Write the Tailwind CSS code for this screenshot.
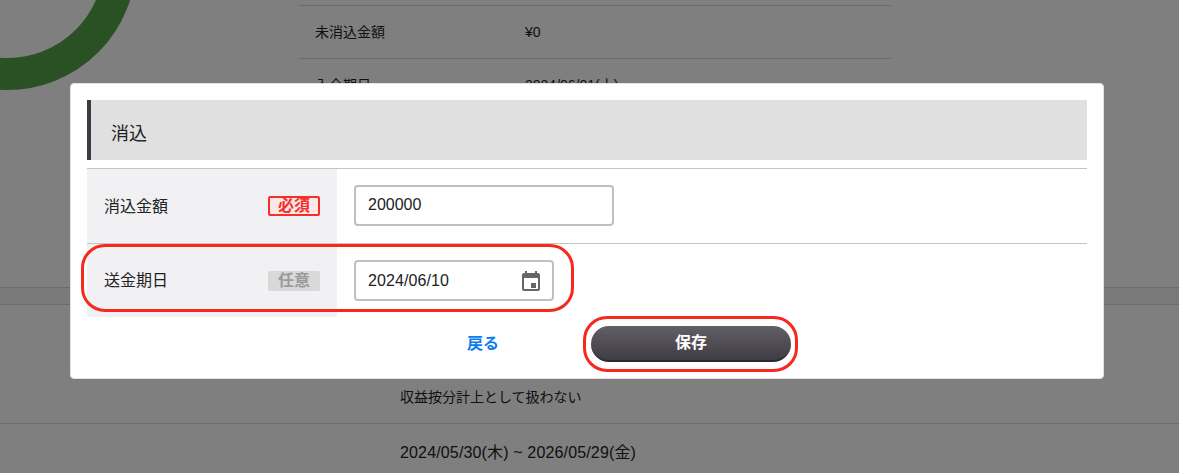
<!DOCTYPE html>
<html lang="ja">
<head>
    <meta charset="UTF-8">
    <title>消込</title>
    <script src="https://cdn.jsdelivr.net/npm/@tailwindcss/browser@4"></script>
</head>
<body class="relative w-[1179px] h-[473px] overflow-hidden bg-white text-[#222] text-sm font-['Liberation_Sans','Noto_Sans_CJK_JP',sans-serif]">
    <!-- page behind the overlay -->
    <div class="absolute left-[-121px] top-[-167px] w-[257px] h-[257px] rounded-full border-[32px] border-[#54a248]"></div>
    <div class="absolute left-[299px] top-0 w-[592px]">
        <div class="h-[6px] border-b border-[#d6d6d6]"></div>
        <div class="flex items-center h-[53px] border-b border-[#d6d6d6] pl-4 pb-px">
            <div class="w-[210px]">未消込金額</div>
            <div>¥0</div>
        </div>
        <div class="flex items-center h-[53px] pl-4 pb-px">
            <div class="w-[210px]">入金期日</div>
            <div>2024/06/01(土)</div>
        </div>
    </div>
    <div class="absolute left-0 top-[287px] w-full h-[18px] bg-[#f4f4f4] border-y border-[#d6d6d6]"></div>
    <div class="absolute left-0 top-[423px] w-full border-t border-[#d6d6d6]"></div>
    <div class="absolute left-[400px] top-[387px]">収益按分計上として扱わない</div>
    <div class="absolute left-[400px] top-[441px] text-base tracking-[0.15px]">2024/05/30(木) ~ 2026/05/29(金)</div>

    <!-- overlay -->
    <div class="absolute inset-0 bg-black/50"></div>

    <!-- modal -->
    <div class="absolute left-[70px] top-[83px] w-[1034px] h-[296px] bg-white border border-[#e2e2e2] rounded-[4px] px-4 pt-4">
        <h2 class="flex items-center h-[60px] bg-[#e0e0e0] border-l-4 border-[#3c3a40] pl-5 text-lg pt-[8px]">消込</h2>
        <div class="mt-2 border-t border-[#c4c4c4]">
            <div class="flex h-[75px] border-b border-[#c4c4c4]">
                <div class="flex items-center justify-between w-[250px] bg-[#f1f1f4] px-[17px]">
                    <span class="text-base pt-[2px]">消込金額</span>
                    <span class="flex items-center justify-center w-[52px] h-[20px] border-2 border-[#f5302a] bg-[#fde8e8] text-[#f5302a] text-base font-bold rounded-[2px]">必須</span>
                </div>
                <div class="flex items-center pl-[17px] pb-px">
                    <div class="flex items-center w-[260px] h-[41px] border-2 border-[#c0c0c0] rounded-[4px] pl-3 pb-[2px] text-base">200000</div>
                </div>
            </div>
            <div class="flex h-[73px]">
                <div class="flex items-center justify-between w-[250px] bg-[#f1f1f4] px-[17px]">
                    <span class="text-base">送金期日</span>
                    <span class="flex items-center justify-center w-[52px] h-[20px] bg-[#d9d9d9] text-[#9a9a9a] text-base font-bold rounded-[2px]">任意</span>
                </div>
                <div class="flex items-center pl-[17px]">
                    <div class="flex items-center justify-between w-[200px] h-[41px] border-2 border-[#c0c0c0] rounded-[4px] pl-3 pr-[9px] text-base">
                        <span class="tracking-[0.1px]">2024/06/10</span>
                        <svg class="w-[24px] h-[24px]" viewBox="0 0 24 24" fill="#666"><path d="M19 4h-1V2h-2v2H8V2H6v2H5c-1.100 0-2 .9-2 2v14c0 1.100.9 2 2 2h14c1.100 0 2-.9 2-2V6c0-1.100-.9-2-2-2zm0 16H5V9h14v11zm-2-6h-5v5h5v-5z"/></svg>
                    </div>
                </div>
            </div>
        </div>
        <div class="flex items-center h-[38px] mt-[8px] relative">
            <span class="absolute left-[380px] text-[#0a7cf0] text-base font-bold">戻る</span>
            <button class="absolute left-[504px] w-[200px] h-[36px] rounded-full bg-gradient-to-b from-[#625f67] to-[#3f3c43] border-b-2 border-[#2c2a30] text-white text-base font-bold">保存</button>
        </div>
    </div>

    <!-- red annotations on the screenshot -->
    <div class="absolute left-[81px] top-[244px] w-[493px] h-[68px] border-[3px] border-[#f5291e] rounded-[24px]"></div>
    <div class="absolute left-[583px] top-[316px] w-[215px] h-[56px] border-[3px] border-[#f5291e] rounded-[24px]"></div>
</body>
</html>
